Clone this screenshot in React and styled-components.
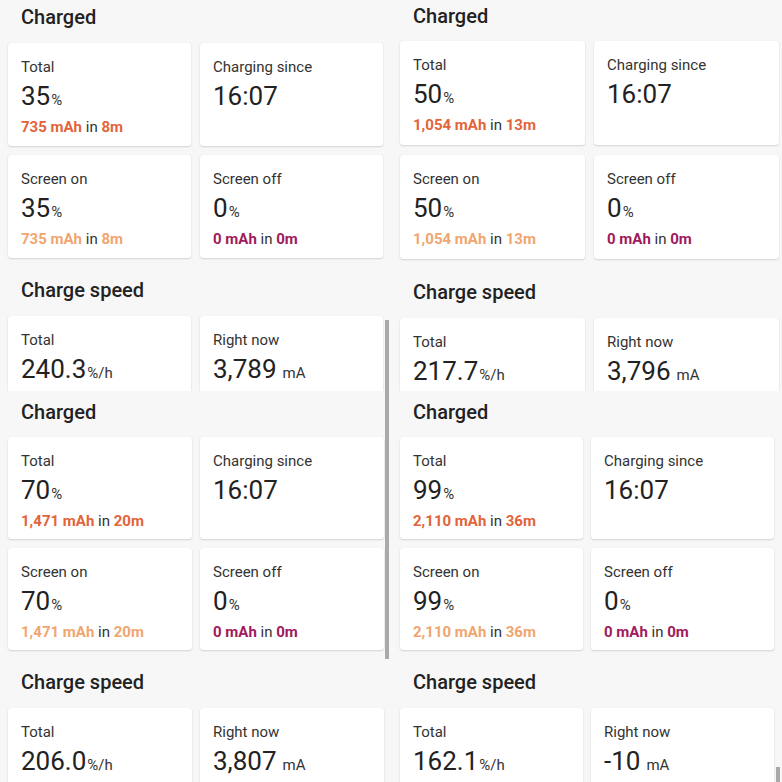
import React from 'react';
import styled, { createGlobalStyle } from 'styled-components';

const GlobalStyle = createGlobalStyle`
  html, body {
    margin: 0;
    padding: 0;
    background: #f7f7f7;
  }
  body {
    font-family: Roboto, "Noto Sans", "Liberation Sans", sans-serif;
    color: #212121;
  }
`;

const Collage = styled.div`
  width: 782px;
  height: 782px;
  display: grid;
  grid-template-columns: 391px 391px;
  grid-template-rows: 391px 391px;
  overflow: hidden;
`;

const Panel = styled.div`
  position: relative;
  overflow: hidden;
  background: #f7f7f7;
  padding: ${(p) => p.$pt}px 0 0 ${(p) => p.$pl}px;
  box-sizing: border-box;
`;

const SectionTitle = styled.h2`
  margin: ${(p) => p.$before || 0}px 0 ${(p) => p.$after}px ${(p) => p.$indent}px;
  font-size: 20px;
  line-height: 24px;
  font-weight: 500;
  color: #222;
`;

const CardGrid = styled.div`
  display: grid;
  grid-template-columns: repeat(2, ${(p) => p.$w}px);
  grid-auto-rows: ${(p) => p.$h}px;
  column-gap: ${(p) => p.$gap}px;
  row-gap: ${(p) => p.$rowGap}px;
`;

const Card = styled.div`
  background: #fff;
  border-radius: 3px;
  box-shadow: 0 1px 2px rgba(0, 0, 0, 0.14), 0 0 1px rgba(0, 0, 0, 0.08);
  padding: 15px 0 0 13px;
  box-sizing: border-box;
`;

const Label = styled.div`
  font-size: 15px;
  line-height: 18px;
  color: #333;
`;

const Value = styled.div`
  margin-top: 5px;
  font-size: 26px;
  line-height: 30px;
  color: #222;
  white-space: nowrap;
`;

const Unit = styled.span`
  font-size: 15px;
  color: #333;
  margin-left: ${(p) => (p.$spaced ? 6 : 1)}px;
`;

const Sub = styled.div`
  margin-top: 3px;
  font-size: 15px;
  line-height: 18px;
  color: #333;
  white-space: nowrap;

  b {
    font-weight: 700;
    color: ${(p) => p.$color};
  }
`;

const ScrollThumb = styled.div`
  position: absolute;
  width: 4px;
  background: #a9a9a9;
  left: ${(p) => p.$x}px;
  top: ${(p) => p.$top}px;
  height: ${(p) => p.$h}px;
`;

const ORANGE = '#e2643a';
const PEACH = '#f1a56f';
const PLUM = '#a01a5c';

const shots = [
  {
    pt: 5, pl: 8, w: 183, gap: 9, h: 103, rowGap: 9, afterTitle: 14, beforeSpeed: 20,
    total: '35', totalSub: ['735 mAh', '8m'],
    speed: '240.3', now: '3,789', speedSub: '5,840 mAh/h', speedColor: ORANGE,
    thumb: { x: 385, top: 320, h: 80 },
  },
  {
    pt: 4, pl: 9, w: 185, gap: 9, h: 104, rowGap: 10, afterTitle: 13, beforeSpeed: 21,
    total: '50', totalSub: ['1,054 mAh', '13m'],
    speed: '217.7', now: '3,796', speedSub: '4,625 mAh/h', speedColor: ORANGE,
  },
  {
    pt: 9, pl: 8, w: 184, gap: 8, h: 102, rowGap: 9, afterTitle: 13, beforeSpeed: 20,
    total: '70', totalSub: ['1,471 mAh', '20m'],
    speed: '206.0', now: '3,807', speedSub: '4,377 mAh/h', speedColor: PEACH,
    thumb: { x: 385, top: 0, h: 268 },
  },
  {
    pt: 9, pl: 9, w: 183, gap: 8, h: 102, rowGap: 9, afterTitle: 13, beforeSpeed: 20,
    total: '99', totalSub: ['2,110 mAh', '36m'],
    speed: '162.1', now: '-10', speedSub: '3,455 mAh/h', speedColor: '#d9c27a',
    thumb: { x: 385, top: 376, h: 20 },
  },
];

function StatCard({ label, value, unit, spaced, sub, subColor }) {
  return (
    <Card>
      <Label>{label}</Label>
      <Value>
        {value}
        {unit && <Unit $spaced={spaced}>{unit}</Unit>}
      </Value>
      {sub && (
        <Sub $color={subColor}>
          <b>{sub[0]}</b> in <b>{sub[1]}</b>
        </Sub>
      )}
    </Card>
  );
}

function Screenshot({ s }) {
  return (
    <Panel $pt={s.pt} $pl={s.pl}>
      <SectionTitle $indent={13} $after={s.afterTitle}>Charged</SectionTitle>
      <CardGrid $w={s.w} $h={s.h} $gap={s.gap} $rowGap={s.rowGap}>
        <StatCard label="Total" value={s.total} unit="%" sub={s.totalSub} subColor={ORANGE} />
        <StatCard label="Charging since" value="16:07" />
        <StatCard label="Screen on" value={s.total} unit="%" sub={s.totalSub} subColor={PEACH} />
        <StatCard label="Screen off" value="0" unit="%" sub={['0 mAh', '0m']} subColor={PLUM} />
      </CardGrid>
      <SectionTitle $indent={13} $before={s.beforeSpeed} $after={14}>Charge speed</SectionTitle>
      <CardGrid $w={s.w} $h={s.h} $gap={s.gap} $rowGap={s.rowGap}>
        <Card>
          <Label>Total</Label>
          <Value>
            {s.speed}
            <Unit>%/h</Unit>
          </Value>
          <Sub $color={s.speedColor}>
            <b>{s.speedSub}</b>
          </Sub>
        </Card>
        <StatCard label="Right now" value={s.now} unit="mA" spaced />
      </CardGrid>
      {s.thumb && <ScrollThumb $x={s.thumb.x} $top={s.thumb.top} $h={s.thumb.h} />}
    </Panel>
  );
}

export default function App() {
  return (
    <>
      <GlobalStyle />
      <Collage>
        {shots.map((s, i) => (
          <Screenshot key={i} s={s} />
        ))}
      </Collage>
    </>
  );
}
